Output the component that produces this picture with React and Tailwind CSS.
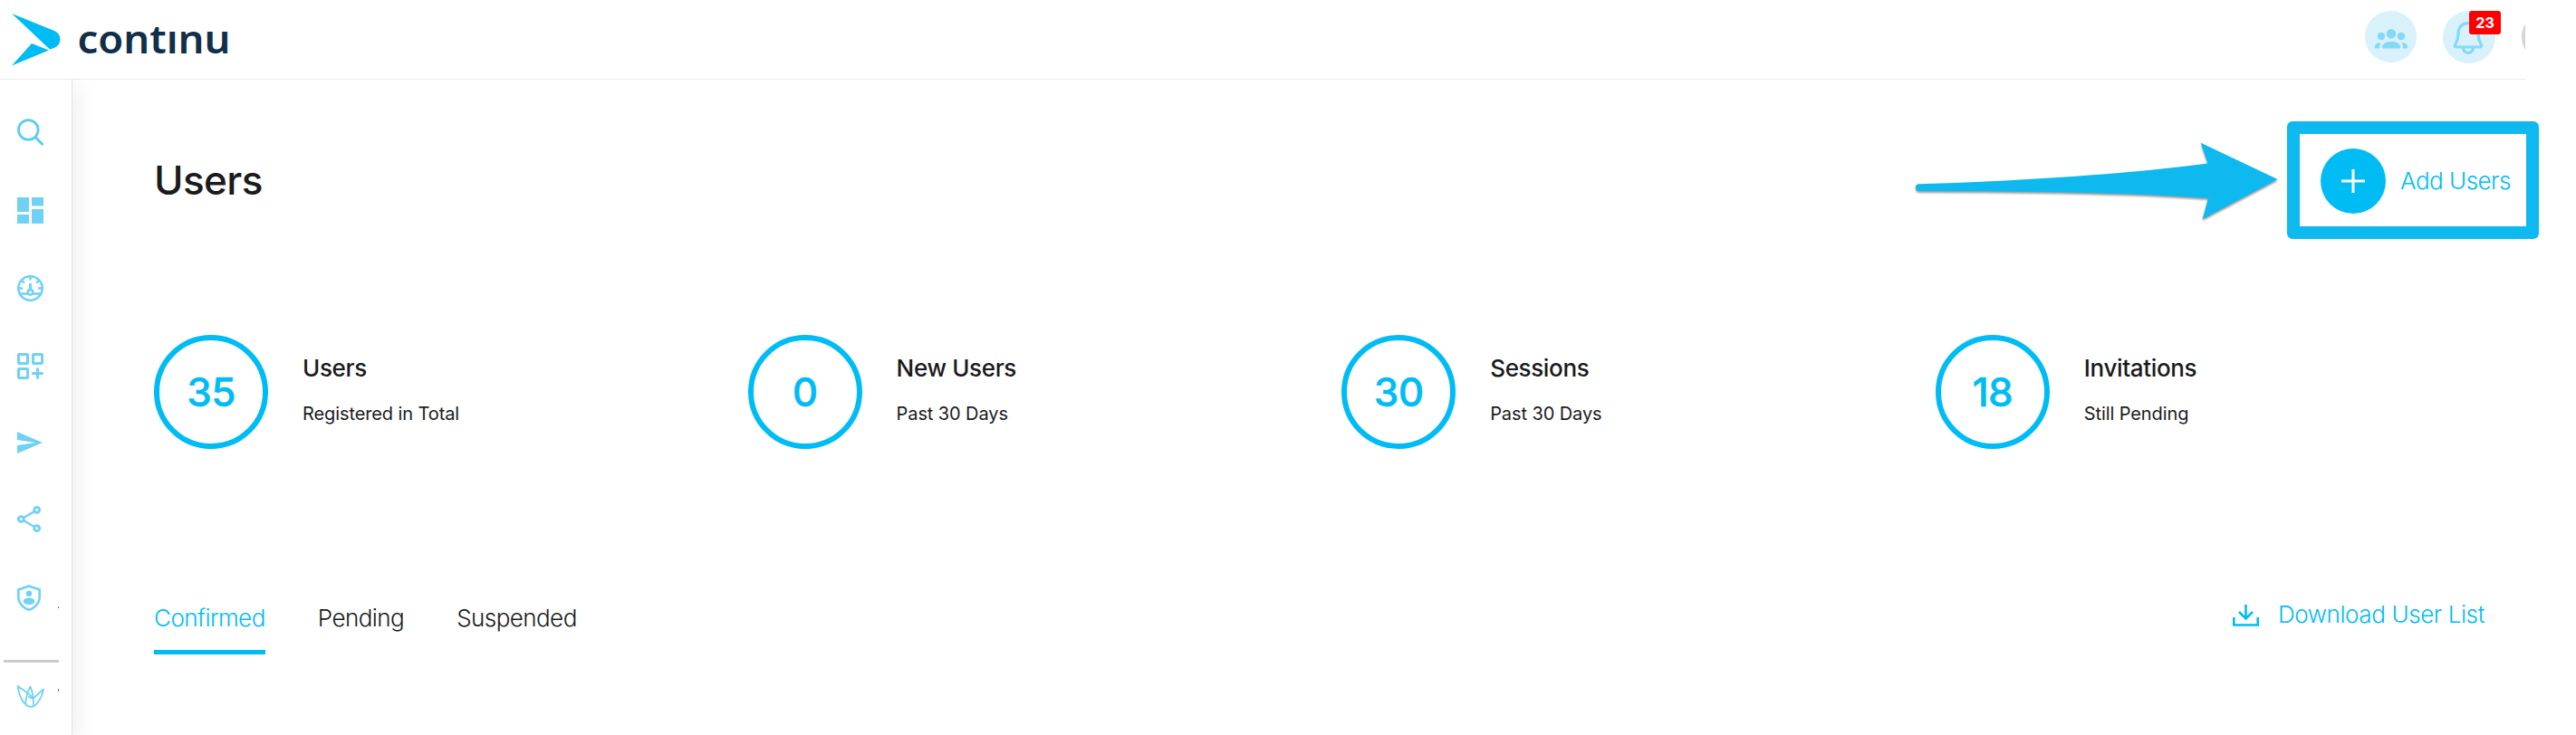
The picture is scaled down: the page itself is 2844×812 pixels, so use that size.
import React from "react";

const stats = [
  { value: 35, title: "Users", caption: "Registered in Total" },
  { value: 0, title: "New Users", caption: "Past 30 Days" },
  { value: 30, title: "Sessions", caption: "Past 30 Days" },
  { value: 18, title: "Invitations", caption: "Still Pending" },
];

const Logo = () => (
  <div className="flex items-start">
    <svg width="54" height="58" viewBox="0 0 54 58" fill="#00bcf5" className="mt-[15px]">
      <path d="M0 0 L47 19 Q53.500 22 53.500 29 Q53 37 42 39.500 Z" />
      <path d="M22 33 L41 40.500 L0 57.500 Z" />
    </svg>
    <svg width="172" height="80" viewBox="0 0 172 80" className="ml-5">
      <text
        x="-1.500"
        y="58.500"
        textLength="169"
        lengthAdjust="spacingAndGlyphs"
        fontFamily="Noto Sans, sans-serif"
        fontWeight="600"
        fontSize="44"
        fill="#122f49"
      >
        contınu
      </text>
    </svg>
  </div>
);

const SearchIcon = () => (
  <svg width="30" height="30" viewBox="0 0 30 30" fill="none" stroke="#5accf6" strokeWidth="2.800">
    <circle cx="12.300" cy="12.500" r="10.800" />
    <path d="M20 20.500 L28.500 29" strokeWidth="3" />
  </svg>
);

const DashboardIcon = () => (
  <svg width="29" height="29" viewBox="0 0 29 29" fill="#70d1f6">
    <path d="M0 0h13v16H0zM16 0h13v9.500H16zM0 19h13v10H0zM16 13h13v16H16z" />
  </svg>
);

const GaugeIcon = () => (
  <svg width="29" height="29" viewBox="0 0 29 29" fill="none" stroke="#70d1f6" strokeWidth="2.600">
    <circle cx="14.500" cy="14.500" r="13.200" />
    <path d="M14.500 1v4.500M2 14.500h4M23 14.500h4M5.500 6.500l2.400 2.200M23.500 6.500l-2.400 2.200" strokeWidth="2.400" />
    <path d="M14.500 10v6" strokeWidth="3" strokeLinecap="round" />
    <circle cx="14.500" cy="18.800" r="2.800" />
    <path d="M3.500 20.500h8.500M17 20.500h8.500" />
  </svg>
);

const AppsIcon = () => (
  <svg width="29" height="29" viewBox="0 0 29 29" fill="none" stroke="#70d1f6" strokeWidth="3">
    <rect x="1.500" y="1.500" width="10" height="10" rx="0.600" />
    <rect x="17.500" y="1.500" width="10" height="10" rx="0.600" />
    <rect x="1.500" y="17.500" width="10" height="10" rx="0.600" />
    <path d="M22.500 17.500v10M17.500 22.500h10" strokeLinecap="round" />
  </svg>
);

const SendIcon = () => (
  <svg width="28" height="24" viewBox="0 0 28 24" fill="#70d1f6">
    <path d="M0 0 L28 12 L0 24 V15 L20 12 L0 9 Z" />
  </svg>
);

const ShareIcon = () => (
  <svg width="26" height="29" viewBox="0 0 26 29" fill="none" stroke="#70d1f6" strokeWidth="2.900">
    <circle cx="4.300" cy="14.500" r="2.900" />
    <circle cx="21.700" cy="4.300" r="2.900" />
    <circle cx="21.700" cy="24.700" r="2.900" />
    <path d="M7 13 L19 6 M7 16 L19 23" strokeWidth="2.500" />
  </svg>
);

const ShieldIcon = () => (
  <svg width="26" height="29" viewBox="0 0 26 29" fill="none" stroke="#70d1f6" strokeWidth="2.600">
    <path d="M13 1.400 L24.700 5.500 V13.500 C24.700 21 18.500 26 13 27.700 C7.500 26 1.300 21 1.300 13.500 V5.500 Z" />
    <circle cx="13" cy="9.700" r="3.200" fill="#70d1f6" stroke="none" />
    <ellipse cx="13" cy="18.200" rx="6.300" ry="3.800" fill="#70d1f6" stroke="none" />
  </svg>
);

const LotusIcon = () => (
  <svg width="30" height="25" viewBox="0 0 30 25" fill="none" stroke="#70d1f6" strokeWidth="1.800" strokeLinejoin="round">
    <path d="M15.500 24 C7 23.500 1.500 11 0.800 0.800 C5 5 12.500 8 17.500 14.500" />
    <path d="M15.500 24 C22 23.500 28 12 28.800 4.500 C24 8.500 19 14 17.500 14.500 C15.500 14.500 13.500 13.500 12 12.500" />
    <path d="M9.500 20.500 C9 12 12 7 14.300 1.500 C16.500 6 18.500 13 17.800 23" />
  </svg>
);

const Sidebar = () => (
  <aside className="w-20 shrink-0 border-r border-[#dfe3f1] bg-white shadow-[4px_6px_24px_rgba(0,0,0,0.08)]">
    <nav className="flex flex-col items-start pl-[19px] pt-[43px]">
      <SearchIcon />
      <div className="mt-[57px]"><DashboardIcon /></div>
      <div className="mt-[57px]"><GaugeIcon /></div>
      <div className="mt-[57px]"><AppsIcon /></div>
      <div className="mt-[58px]"><SendIcon /></div>
      <div className="mt-[58px]"><ShareIcon /></div>
      <div className="mt-[58px] flex items-end gap-[19px]">
        <ShieldIcon />
        <span className="mb-[3px] h-0.5 w-px bg-gray-500" />
      </div>
    </nav>
    <div className="ml-1 mt-[54px] h-[3px] w-[61px] bg-[#cccccc]" />
    <div className="ml-[19px] mt-[25px] flex items-start gap-[15px]">
      <LotusIcon />
      <span className="mt-1 h-[3px] w-px bg-gray-500" />
    </div>
  </aside>
);

const Header = () => (
  <header className="flex h-[88px] w-[2788px] items-start justify-between overflow-hidden border-b border-[#e9e9eb]">
    <div className="pl-[13px]">
      <Logo />
    </div>
    <div className="flex w-[177px] shrink-0 items-start gap-[29px] pt-3">
      <div className="flex size-[57px] shrink-0 items-center justify-center rounded-full bg-[#d8f1fb]">
        <svg width="36" height="22" viewBox="0 0 36 22" fill="#84d9f8" className="mt-1">
          <circle cx="18" cy="5.300" r="5.200" />
          <circle cx="7" cy="8" r="4.200" />
          <circle cx="29" cy="8" r="4.200" />
          <path d="M8 21.500 V19.500 C8 12 28 12 28 19.500 V21.500 Z" />
          <path d="M0 21.500 V19.500 C0 16.500 3 15.300 6.500 15.300 C5.500 17 5 18.500 5 21.500 Z" />
          <path d="M36 21.500 V19.500 C36 16.500 33 15.300 29.500 15.300 C30.500 17 31 18.500 31 21.500 Z" />
        </svg>
      </div>
      <div className="relative flex size-[58px] shrink-0 justify-center rounded-full bg-[#d8f1fb] pt-3">
        <svg width="34" height="36" viewBox="0 0 34 36" fill="none" stroke="#84d9f8" strokeWidth="3.200" strokeLinejoin="round" className="-ml-0.5">
          <path d="M17 1.600 C9.500 1.600 6 7 6 13.500 C6 19 5 21 3 24.500 C2 26.500 2 28 4 28 H30 C32 28 32 26.500 31 24.500 C29 21 28 19 28 13.500 C28 7 24.500 1.600 17 1.600 Z" />
          <path d="M11.500 29 C12 36 22 36 22.500 29" />
        </svg>
        <span className="absolute left-[29px] top-0 flex h-[26px] w-[35px] items-center justify-center rounded-[3px] bg-[#ff0000] text-base font-bold leading-none text-white">
          23
        </span>
      </div>
      <div className="size-[57px] shrink-0 rounded-full bg-[#d5d5d5]" />
    </div>
  </header>
);

const Stat = ({ value, title, caption }) => (
  <div className="flex w-[655.6px] shrink-0">
    <div className="flex size-[126px] items-center justify-center rounded-full border-[6px] border-[#00bcf5] pb-px text-[44px] font-medium tracking-[-0.6px] text-[#00bcf5] [-webkit-text-stroke:0.5px_#00bcf5]">
      {value}
    </div>
    <div className="ml-[38px] pt-[21px]">
      <h3 className="text-[26px] font-medium leading-8 tracking-[-0.35px]">{title}</h3>
      <p className="mt-[21px] text-xl font-normal leading-[26px] tracking-[-0.1px]">{caption}</p>
    </div>
  </div>
);

const App = () => {
  return (
    <div className="h-[812px] w-[2844px] overflow-hidden bg-white font-['Inter',sans-serif] text-[#1a1b1d]">
      <Header />
      <div className="flex h-[724px] overflow-hidden">
        <Sidebar />
        <main className="w-[2723px] pl-[90px]">
          <div className="flex items-start justify-between pt-[46px]">
            <h1 className="mt-[38px] text-[44px] font-medium leading-[54px] tracking-[-0.6px]">Users</h1>
            <div className="flex items-start">
              <svg width="410" height="100" viewBox="0 0 410 100" className="mr-0.5 mt-[18px] drop-shadow-[0_2px_1px_rgba(0,0,0,0.4)]">
                <path
                  d="M6 51.300 Q200 45 324.500 28.500 L316.700 5.700 L401.500 46 L318.700 90 L325 67 Q220 59 5.500 59 A3.800 3.800 0 0 1 6 51.300 Z"
                  fill="#0db9ee"
                />
              </svg>
              <div className="flex h-[130px] w-[278px] items-center rounded-md border-[14px] border-[#0db9ee] pl-[23px] pt-0.5">
                <div className="flex size-[72px] shrink-0 items-center justify-center rounded-full bg-[#00bcf5]">
                  <svg width="26" height="26" viewBox="0 0 26 26" stroke="white" strokeWidth="3">
                    <path d="M13 0v26M0 13h26" />
                  </svg>
                </div>
                <span className="mb-0.5 ml-4 whitespace-nowrap text-[26px] font-light tracking-[-0.5px] text-[#00bcf5]">Add Users</span>
              </div>
            </div>
          </div>

          <div className="mt-[106px] flex">
            {stats.map((stat) => (
              <Stat key={stat.title} {...stat} />
            ))}
          </div>

          <div className="mr-[60px] mt-[163px] flex items-start justify-between text-[26px] font-light leading-8 tracking-[-0.55px]">
            <div className="flex gap-[58px] pt-2">
              <span className="h-[56px] border-b-[5px] border-[#00bcf5] text-[#00bcf5]">Confirmed</span>
              <span>Pending</span>
              <span>Suspended</span>
            </div>
            <div className="flex pt-1 tracking-[-0.4px] text-[#00bcf5]">
              <svg width="29" height="24" viewBox="0 0 29 24" fill="none" stroke="#00bcf5" strokeWidth="2.600" className="mr-[21px] mt-[5px]">
                <path d="M14.500 0v15M7 8l7.500 7.500L22 8" />
                <path d="M1.300 14v8.500h26.400V14" />
              </svg>
              <span>Download User List</span>
            </div>
          </div>
        </main>
      </div>
    </div>
  );
};

export default App;
